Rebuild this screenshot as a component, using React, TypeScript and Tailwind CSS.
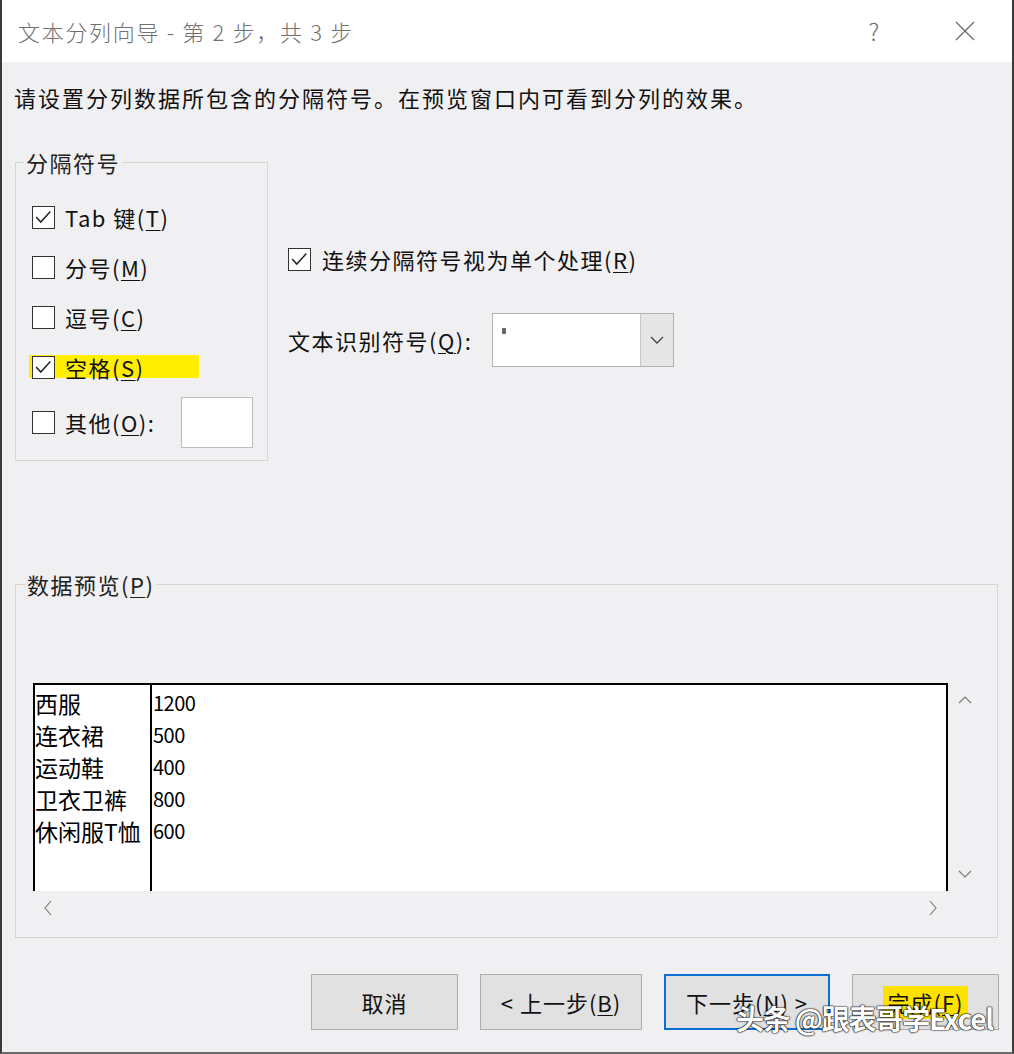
import React from "react";

const FONT = { fontFamily: '"Noto Sans CJK SC", "Noto Sans", sans-serif' };

function Check({ checked }: { checked: boolean }) {
  return (
    <div className="relative w-[23px] h-[23px] border-[1.5px] border-[#333] bg-white shrink-0">
      {checked && (
        <svg viewBox="0 0 23 23" className="absolute inset-0 w-full h-full" fill="none">
          <polyline points="3.5,11 8.5,16.5 19,5" stroke="#222" strokeWidth="1.6" />
        </svg>
      )}
    </div>
  );
}

function U({ c }: { c: string }) {
  return <span className="underline underline-offset-[3px] decoration-1">{c}</span>;
}

function Btn({ children, primary }: { children: React.ReactNode; primary?: boolean }) {
  return (
    <div
      className={
        "h-[56px] flex items-center justify-center bg-[#e1e1e1] text-[22px] tracking-[1px] text-[#111] " +
        (primary ? "border-2 border-[#0a6fd6]" : "border border-[#adadad]")
      }
    >
      {children}
    </div>
  );
}

export default function App() {
  const rows = [
    ["西服", "1200"],
    ["连衣裙", "500"],
    ["运动鞋", "400"],
    ["卫衣卫裤", "800"],
    ["休闲服T恤", "600"],
  ];
  return (
    <div
      style={FONT}
      className="relative w-[1014px] h-[1054px] bg-[#f0eff1] border-l-2 border-r-2 border-b-2 border-l-[#3a3a3a] border-r-[#3a3a3a] border-b-[#6a6a6a] overflow-hidden flex flex-col"
    >
      {/* Title bar */}
      <div className="h-[62px] bg-white flex items-center shrink-0">
        <div className="ml-[16px] text-[22px] font-light text-[#707070] tracking-[1.7px]">
          文本分列向导 - 第 2 步，共 3 步
        </div>
        <div className="ml-auto flex items-center">
          <div className="text-[24px] font-light text-[#707070] w-[20px] text-center mr-[70px]">?</div>
          <svg width="22" height="22" viewBox="0 0 22 22" className="mr-[36px]">
            <line x1="2" y1="2" x2="20" y2="20" stroke="#6a6a6a" strokeWidth="1.3" />
            <line x1="20" y1="2" x2="2" y2="20" stroke="#6a6a6a" strokeWidth="1.3" />
          </svg>
        </div>
      </div>

      {/* Instruction */}
      <div className="mt-[20px] ml-[12px] h-[30px] leading-[30px] text-[22px] tracking-[2px] text-[#111]">
        请设置分列数据所包含的分隔符号。在预览窗口内可看到分列的效果。
      </div>

      {/* Upper section */}
      <div className="mt-[35px] flex">
        <fieldset className="ml-[13px] w-[253px] border border-[#d6d6d6] pl-[16px] pr-[14px] pt-[15px] pb-[12px]">
          <legend className="ml-[-8px] px-[2px] text-[22px] tracking-[1.5px] leading-[30px] text-[#222]">分隔符号</legend>
          <div className="h-[50px] flex items-center gap-[10px] text-[22px] tracking-[1.5px] text-[#111]">
            <Check checked />
            <span>
              Tab 键(<U c="T" />)
            </span>
          </div>
          <div className="h-[50px] flex items-center gap-[10px] text-[22px] tracking-[1.5px] text-[#111]">
            <Check checked={false} />
            <span>
              分号(<U c="M" />)
            </span>
          </div>
          <div className="h-[50px] flex items-center gap-[10px] text-[22px] tracking-[1.5px] text-[#111]">
            <Check checked={false} />
            <span>
              逗号(<U c="C" />)
            </span>
          </div>
          <div className="relative h-[50px] flex items-center gap-[10px] text-[22px] tracking-[1.5px] text-[#111]">
            <div className="absolute left-[-3px] top-[13px] w-[170px] h-[23px] bg-[#ffee00]" />
            <div className="relative">
              <Check checked />
            </div>
            <span className="relative">
              空格(<U c="S" />)
            </span>
          </div>
          <div className="h-[56px] pt-[5px] flex items-center gap-[10px] text-[22px] tracking-[1.5px] text-[#111]">
            <Check checked={false} />
            <span>
              其他(<U c="O" />):
            </span>
            <div className="ml-auto w-[72px] h-[51px] bg-white border border-[#bdbdbd]" />
          </div>
        </fieldset>

        <div className="ml-[20px] pt-[97px] flex flex-col">
          <div className="h-[30px] flex items-center gap-[11px] text-[22px] tracking-[1.5px] text-[#111]">
            <Check checked />
            <span>
              连续分隔符号视为单个处理(<U c="R" />)
            </span>
          </div>
          <div className="mt-[39px] flex items-center text-[22px] tracking-[1.5px] text-[#111]">
            <span className="w-[204px]">
              文本识别符号(<U c="Q" />):
            </span>
            <div className="w-[182px] h-[54px] bg-white border border-[#b4b4b4] flex">
              <div className="flex-1 pl-[9px] pt-[14px]">
                <div className="w-[4px] h-[6px] bg-[#666] rounded-[1px]" />
              </div>
              <div className="w-[33px] h-full bg-[#e6e6e6] border-l border-[#c8c8c8] flex items-center justify-center">
                <svg width="14" height="10" viewBox="0 0 14 10">
                  <polyline points="1,2 7,8 13,2" fill="none" stroke="#444" strokeWidth="1.3" />
                </svg>
              </div>
            </div>
          </div>
        </div>
      </div>

      {/* Preview */}
      <fieldset className="mt-[108px] ml-[13px] w-[983px] border border-[#d6d6d6] pl-[17px] pr-[14px] pt-[84px] pb-[13px]">
        <legend className="ml-[-8px] px-[2px] text-[22px] tracking-[1.5px] leading-[30px] text-[#222]">
          数据预览(<U c="P" />)
        </legend>
        <div className="flex">
          <div className="w-[915px] h-[208px] bg-white border-t-2 border-l-2 border-r-2 border-black flex">
            <div className="w-[117px] border-r-2 border-black text-[23px] text-black leading-[32px] pt-[2px]">
              {rows.map((r) => (
                <div key={r[0]} className="h-[32px] whitespace-nowrap">
                  {r[0]}
                </div>
              ))}
            </div>
            <div className="flex-1 text-[20px] text-black leading-[32px] pt-[2px] pl-[1px]">
              {rows.map((r) => (
                <div key={r[1]} className="h-[32px] tracking-[-0.5px]">
                  {r[1]}
                </div>
              ))}
            </div>
          </div>
          <div className="w-[34px] h-[208px] flex flex-col items-center justify-between py-[12px]">
            <svg width="14" height="10" viewBox="0 0 14 10">
              <polyline points="1,8 7,2 13,8" fill="none" stroke="#777" strokeWidth="1.1" />
            </svg>
            <svg width="14" height="10" viewBox="0 0 14 10">
              <polyline points="1,2 7,8 13,2" fill="none" stroke="#777" strokeWidth="1.1" />
            </svg>
          </div>
        </div>
        <div className="w-[915px] h-[33px] flex items-center justify-between px-[10px]">
          <svg width="10" height="16" viewBox="0 0 10 16">
            <polyline points="8,1 2,8 8,15" fill="none" stroke="#777" strokeWidth="1.1" />
          </svg>
          <svg width="10" height="16" viewBox="0 0 10 16">
            <polyline points="2,1 8,8 2,15" fill="none" stroke="#777" strokeWidth="1.1" />
          </svg>
        </div>
      </fieldset>

      {/* Buttons */}
      <div className="mt-[36px] ml-[309px] flex gap-[22px]">
        <div className="w-[147px]">
          <Btn>取消</Btn>
        </div>
        <div className="w-[162px]">
          <Btn>
            &lt; 上一步(<U c="B" />)
          </Btn>
        </div>
        <div className="w-[166px]">
          <Btn primary>
            下一步(<U c="N" />) &gt;
          </Btn>
        </div>
        <div className="w-[147px]">
          <Btn>
            <span className="bg-[#ffe100] px-[4px]">
              完成(<U c="F" />)
            </span>
          </Btn>
        </div>
      </div>

      {/* Watermark */}
      <div className="absolute left-[734px] top-[1000px] flex items-center text-[28px] font-bold text-white leading-[36px] tracking-[-1.2px] [text-shadow:0_0_2px_#000,0_0_1px_#000,0_0_1px_#000]">
        头条 @跟表哥学Excel
      </div>
    </div>
  );
}
